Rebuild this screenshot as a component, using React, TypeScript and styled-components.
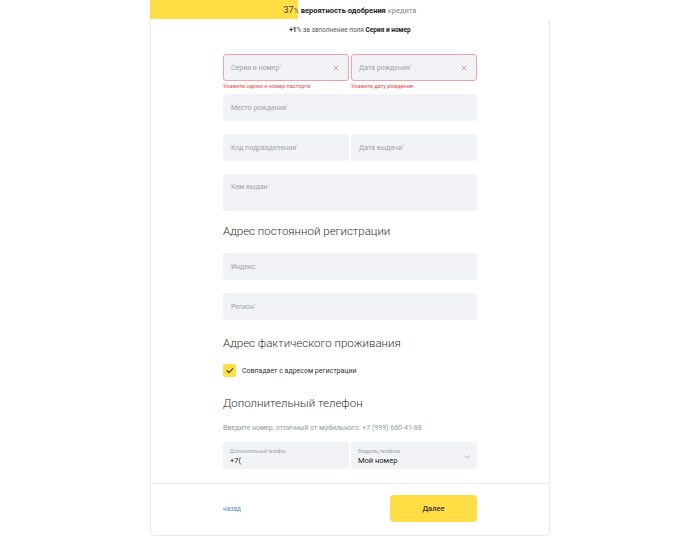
import { FC } from 'react';
import styled, { createGlobalStyle } from 'styled-components';

const GlobalStyle = createGlobalStyle`
    html, body {
        margin: 0;
        padding: 0;
        background: #ffffff;
        font-family: Roboto, "Noto Sans", Arial, sans-serif;
        color: #333333;
    }
`;

const Page = styled.div`
    width: 700px;
    height: 551px;
    display: flex;
    justify-content: center;
    align-items: flex-start;
`;

const Card = styled.div`
    width: 400px;
    box-sizing: border-box;
    border: 1px solid #ebebeb;
    border-top: none;
    border-radius: 0 0 5px 5px;
    display: flex;
    flex-direction: column;
`;

const Progress = styled.div`
    position: relative;
    height: 19px;
    margin: 0 -1px;
    background: #ffffff;
    display: flex;
    align-items: center;
    justify-content: center;
`;

const ProgressFill = styled.div`
    position: absolute;
    left: 0;
    top: 0;
    bottom: 0;
    background: #ffdd44;
`;

const ProgressText = styled.div`
    position: relative;
    font-size: 7.5px;
    color: #333;
    white-space: nowrap;

    b {
        font-weight: 700;
        color: #222;
    }
`;

const Percent = styled.span`
    font-size: 9px;
    color: #333;

    small {
        font-size: 7px;
        color: #666;
    }
`;

const Muted = styled.span`
    color: #888;
`;

const Bonus = styled.div`
    margin-top: 6px;
    text-align: center;
    font-size: 6.5px;
    line-height: 10px;
    color: #555;

    b {
        color: #222;
        font-weight: 700;
    }
`;

const Body = styled.div`
    width: 254px;
    align-self: center;
    margin-top: 19px;
    padding-bottom: 14px;
    display: flex;
    flex-direction: column;
`;

const Row = styled.div<{ $mb?: number }>`
    display: grid;
    grid-template-columns: 1fr 1fr;
    gap: 2px;
    margin-bottom: ${(p) => p.$mb ?? 13}px;
`;

const Field = styled.div<{ $error?: boolean; $tall?: boolean; $mb?: number }>`
    height: ${(p) => (p.$tall ? 37 : 27)}px;
    box-sizing: border-box;
    background: #f1f3f6;
    border: 1px solid ${(p) => (p.$error ? '#f0a2a8' : '#f1f3f6')};
    border-radius: 3px;
    padding: ${(p) => (p.$tall ? '8px' : '0')} 7px 0 7px;
    display: flex;
    align-items: ${(p) => (p.$tall ? 'flex-start' : 'center')};
    justify-content: space-between;
    margin-bottom: ${(p) => p.$mb ?? 0}px;
`;

const Placeholder = styled.span`
    font-size: 7px;
    color: #9ea3aa;

    sup {
        font-size: 5px;
        color: #c6c9cd;
        vertical-align: top;
        position: relative;
        top: -1px;
    }
`;

const ClearIcon = styled.svg`
    width: 6px;
    height: 6px;
    margin-right: 2px;
`;

const ErrorRow = styled.div`
    display: grid;
    grid-template-columns: 1fr 1fr;
    gap: 2px;
    height: 13px;
`;

const ErrorText = styled.span`
    font-size: 5.5px;
    line-height: 10px;
    color: #e84950;
`;

const Heading = styled.h2<{ $mt: number; $mb: number }>`
    margin: ${(p) => p.$mt}px 0 ${(p) => p.$mb}px;
    font-size: 11.5px;
    line-height: 16px;
    font-weight: 300;
    color: #333;
`;

const CheckRow = styled.label`
    display: flex;
    align-items: center;
    gap: 6px;
    height: 13px;
    font-size: 7px;
    color: #333;
`;

const CheckBox = styled.span`
    width: 13px;
    height: 13px;
    border-radius: 2px;
    background: #ffdd44;
    display: flex;
    align-items: center;
    justify-content: center;
`;

const Hint = styled.div`
    margin: 12px 0 9px;
    font-size: 7px;
    line-height: 10px;
    color: #9299a2;
`;

const FilledField = styled.div`
    height: 27px;
    box-sizing: border-box;
    background: #f1f3f6;
    border-radius: 3px;
    padding: 2px 7px 0;
    display: flex;
    align-items: center;
    justify-content: space-between;
`;

const FilledText = styled.div`
    display: flex;
    flex-direction: column;
    gap: 2px;
`;

const SmallLabel = styled.span`
    font-size: 4.5px;
    color: #9ea3aa;
`;

const Value = styled.span`
    font-size: 7.5px;
    color: #222;
`;

const Footer = styled.div`
    border-top: 1px solid #ebebeb;
    padding: 11px 72px 13px;
    display: flex;
    align-items: center;
    justify-content: space-between;
`;

const BackLink = styled.a`
    font-size: 6.5px;
    color: #5b8bc2;
    text-decoration: none;
`;

const NextButton = styled.button`
    width: 87px;
    height: 27px;
    border: none;
    border-radius: 4px;
    background: #ffdd44;
    font-family: inherit;
    font-size: 7.5px;
    font-weight: 500;
    color: #333;
`;

const Clear: FC = () => (
    <ClearIcon viewBox="0 0 6 6">
        <path d="M0.5 0.5 L5.5 5.5 M5.5 0.5 L0.5 5.5" stroke="#ea8a90" strokeWidth="0.8" />
    </ClearIcon>
);

interface IInputProps {
    label: string;
    error?: boolean;
    tall?: boolean;
    mb?: number;
}

const Input: FC<IInputProps> = ({ label, error, tall, mb }) => (
    <Field $error={error} $tall={tall} $mb={mb}>
        <Placeholder>
            {label}
            <sup>*</sup>
        </Placeholder>
        {error && <Clear />}
    </Field>
);

const PlainInput: FC<{ label: string; mb?: number }> = ({ label, mb }) => (
    <Field $mb={mb}>
        <Placeholder>{label}</Placeholder>
    </Field>
);

export default function App() {
    return (
        <Page>
            <GlobalStyle />
            <Card>
                <Progress>
                    <ProgressFill style={{ width: '37%' }} />
                    <ProgressText>
                        <Percent>
                            37<small>%</small>
                        </Percent>{' '}
                        <b>вероятность одобрения</b> <Muted>кредита</Muted>
                    </ProgressText>
                </Progress>
                <Bonus>
                    <b>+1</b>% за заполнение поля <b>Серия и номер</b>
                </Bonus>
                <Body>
                    <Row $mb={0}>
                        <Input label="Серия и номер" error />
                        <Input label="Дата рождения" error />
                    </Row>
                    <ErrorRow>
                        <ErrorText>Укажите серию и номер паспорта</ErrorText>
                        <ErrorText>Укажите дату рождения</ErrorText>
                    </ErrorRow>
                    <Input label="Место рождения" mb={13} />
                    <Row>
                        <Input label="Код подразделения" />
                        <Input label="Дата выдачи" />
                    </Row>
                    <Input label="Кем выдан" tall />

                    <Heading $mt={12} $mb={14}>Адрес постоянной регистрации</Heading>
                    <PlainInput label="Индекс" mb={13} />
                    <Input label="Регион" />

                    <Heading $mt={15} $mb={13}>Адрес фактического проживания</Heading>
                    <CheckRow>
                        <CheckBox>
                            <svg width="8" height="7" viewBox="0 0 8 7">
                                <path d="M0.8 3.5 L3 5.6 L7.2 1" fill="none" stroke="#333" strokeWidth="1.1" />
                            </svg>
                        </CheckBox>
                        Совпадает с адресом регистрации
                    </CheckRow>

                    <Heading $mt={18} $mb={0}>Дополнительный телефон</Heading>
                    <Hint>Введите номер, отличный от мобильного: +7 (999) 660-41-88</Hint>
                    <Row $mb={0}>
                        <FilledField>
                            <FilledText>
                                <SmallLabel>Дополнительный телефон</SmallLabel>
                                <Value>+7(</Value>
                            </FilledText>
                        </FilledField>
                        <FilledField>
                            <FilledText>
                                <SmallLabel>Владелец телефона</SmallLabel>
                                <Value>Мой номер</Value>
                            </FilledText>
                            <svg width="6" height="4" viewBox="0 0 6 4">
                                <path d="M0.5 0.8 L3 3.2 L5.5 0.8" fill="none" stroke="#9ea3aa" strokeWidth="0.8" />
                            </svg>
                        </FilledField>
                    </Row>
                </Body>
                <Footer>
                    <BackLink href="#">назад</BackLink>
                    <NextButton>Далее</NextButton>
                </Footer>
            </Card>
        </Page>
    );
}
